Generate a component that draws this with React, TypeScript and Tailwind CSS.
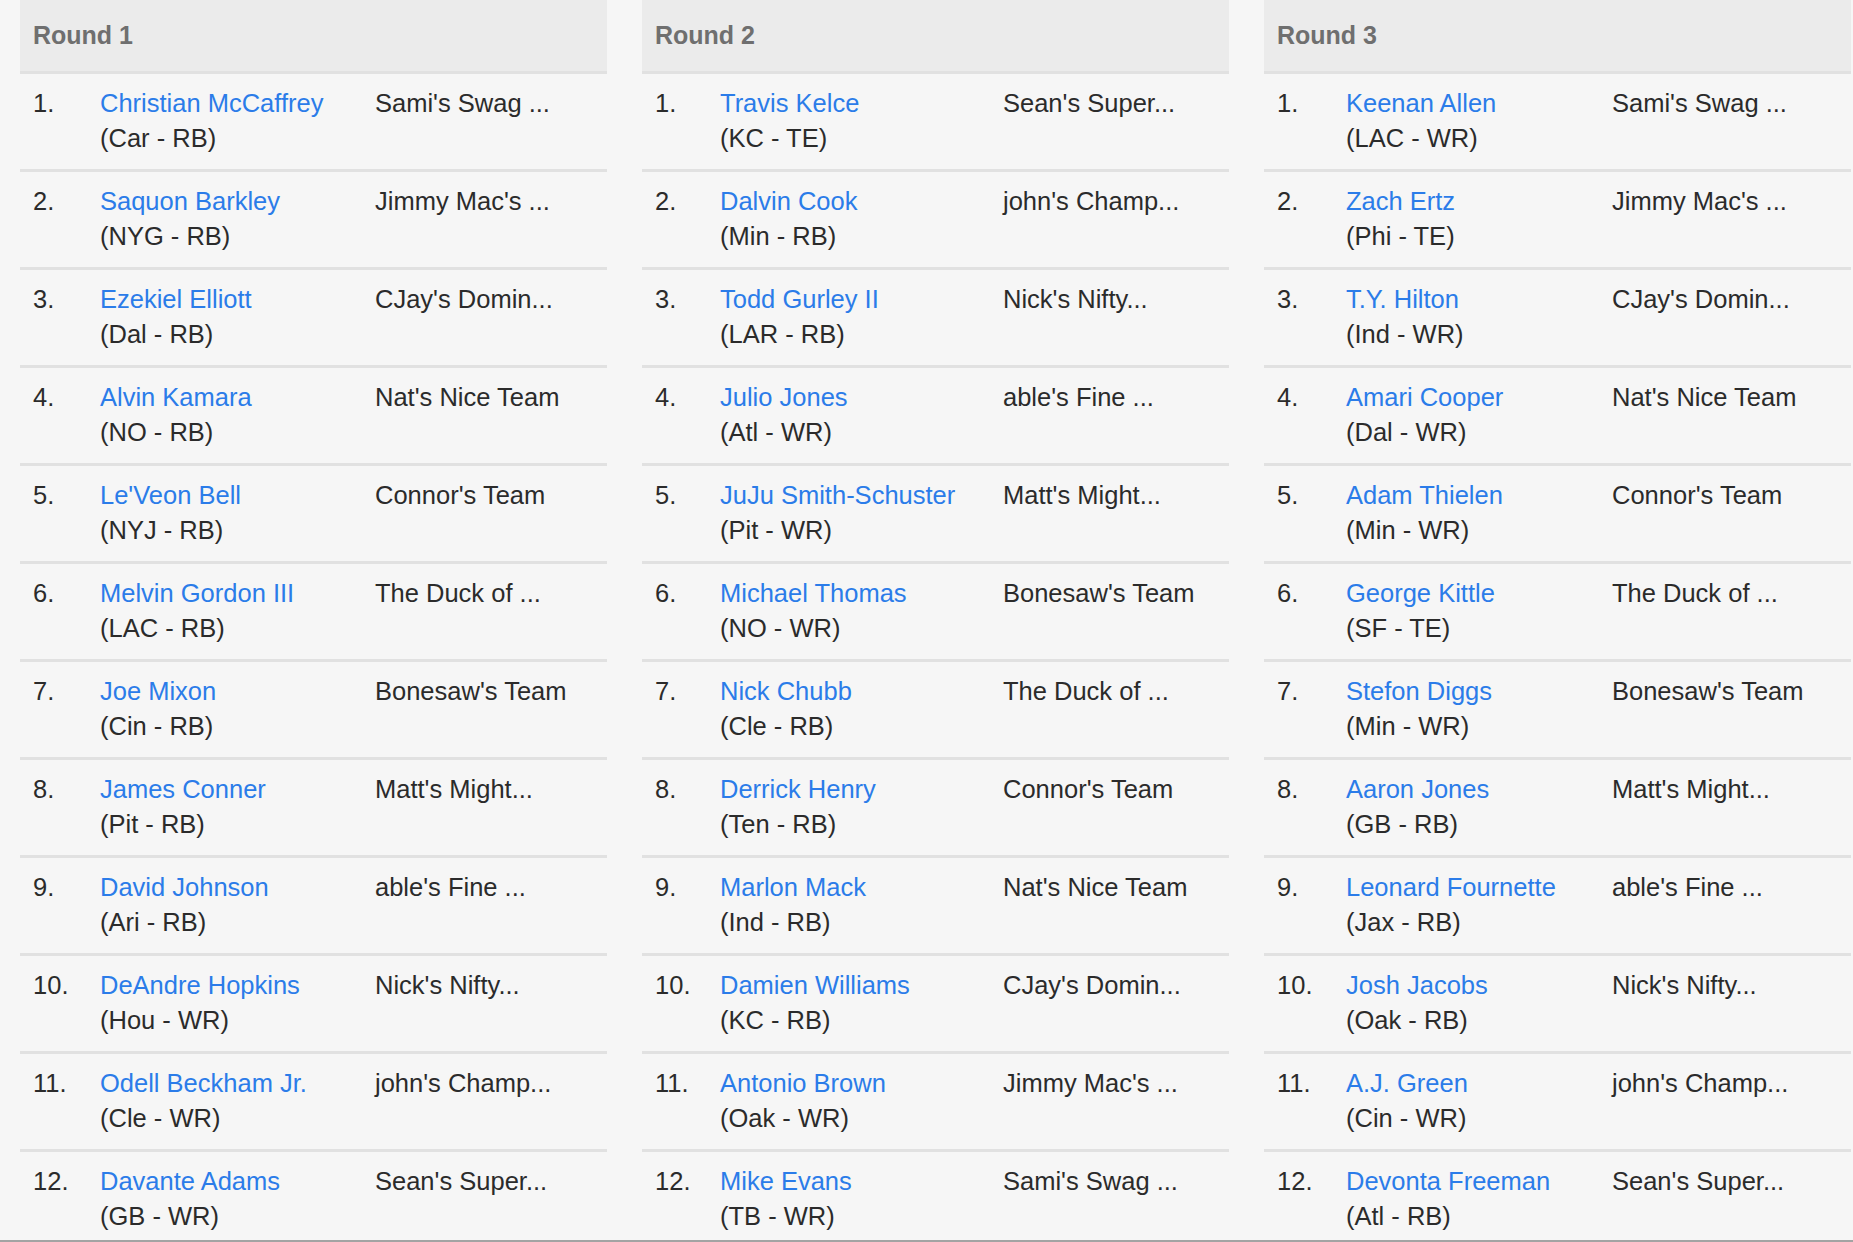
type Pick = { name: string; pos: string; team: string };

type Round = {
  title: string;
  numCol: string;
  nameCol: string;
  picks: Pick[];
};

const rounds: Round[] = [
  {
    title: "Round 1",
    numCol: "w-[67px]",
    nameCol: "w-[275px]",
    picks: [
      { name: "Christian McCaffrey", pos: "(Car - RB)", team: "Sami's Swag ..." },
      { name: "Saquon Barkley", pos: "(NYG - RB)", team: "Jimmy Mac's ..." },
      { name: "Ezekiel Elliott", pos: "(Dal - RB)", team: "CJay's Domin..." },
      { name: "Alvin Kamara", pos: "(NO - RB)", team: "Nat's Nice Team" },
      { name: "Le'Veon Bell", pos: "(NYJ - RB)", team: "Connor's Team" },
      { name: "Melvin Gordon III", pos: "(LAC - RB)", team: "The Duck of ..." },
      { name: "Joe Mixon", pos: "(Cin - RB)", team: "Bonesaw's Team" },
      { name: "James Conner", pos: "(Pit - RB)", team: "Matt's Might..." },
      { name: "David Johnson", pos: "(Ari - RB)", team: "able's Fine ..." },
      { name: "DeAndre Hopkins", pos: "(Hou - WR)", team: "Nick's Nifty..." },
      { name: "Odell Beckham Jr.", pos: "(Cle - WR)", team: "john's Champ..." },
      { name: "Davante Adams", pos: "(GB - WR)", team: "Sean's Super..." },
    ],
  },
  {
    title: "Round 2",
    numCol: "w-[65px]",
    nameCol: "w-[283px]",
    picks: [
      { name: "Travis Kelce", pos: "(KC - TE)", team: "Sean's Super..." },
      { name: "Dalvin Cook", pos: "(Min - RB)", team: "john's Champ..." },
      { name: "Todd Gurley II", pos: "(LAR - RB)", team: "Nick's Nifty..." },
      { name: "Julio Jones", pos: "(Atl - WR)", team: "able's Fine ..." },
      { name: "JuJu Smith-Schuster", pos: "(Pit - WR)", team: "Matt's Might..." },
      { name: "Michael Thomas", pos: "(NO - WR)", team: "Bonesaw's Team" },
      { name: "Nick Chubb", pos: "(Cle - RB)", team: "The Duck of ..." },
      { name: "Derrick Henry", pos: "(Ten - RB)", team: "Connor's Team" },
      { name: "Marlon Mack", pos: "(Ind - RB)", team: "Nat's Nice Team" },
      { name: "Damien Williams", pos: "(KC - RB)", team: "CJay's Domin..." },
      { name: "Antonio Brown", pos: "(Oak - WR)", team: "Jimmy Mac's ..." },
      { name: "Mike Evans", pos: "(TB - WR)", team: "Sami's Swag ..." },
    ],
  },
  {
    title: "Round 3",
    numCol: "w-[69px]",
    nameCol: "w-[266px]",
    picks: [
      { name: "Keenan Allen", pos: "(LAC - WR)", team: "Sami's Swag ..." },
      { name: "Zach Ertz", pos: "(Phi - TE)", team: "Jimmy Mac's ..." },
      { name: "T.Y. Hilton", pos: "(Ind - WR)", team: "CJay's Domin..." },
      { name: "Amari Cooper", pos: "(Dal - WR)", team: "Nat's Nice Team" },
      { name: "Adam Thielen", pos: "(Min - WR)", team: "Connor's Team" },
      { name: "George Kittle", pos: "(SF - TE)", team: "The Duck of ..." },
      { name: "Stefon Diggs", pos: "(Min - WR)", team: "Bonesaw's Team" },
      { name: "Aaron Jones", pos: "(GB - RB)", team: "Matt's Might..." },
      { name: "Leonard Fournette", pos: "(Jax - RB)", team: "able's Fine ..." },
      { name: "Josh Jacobs", pos: "(Oak - RB)", team: "Nick's Nifty..." },
      { name: "A.J. Green", pos: "(Cin - WR)", team: "john's Champ..." },
      { name: "Devonta Freeman", pos: "(Atl - RB)", team: "Sean's Super..." },
    ],
  },
];

function RoundColumn({ round }: { round: Round }) {
  return (
    <div className="w-[587px] shrink-0">
      <div className="flex h-[74px] items-center border-b-[3px] border-[#e1e1e1] bg-[#ebebeb] pl-[13px] text-[25px] font-bold text-[#6f6f6f]">
        {round.title}
      </div>
      {round.picks.map((pick, i) => (
        <div
          key={i}
          className="flex h-[98px] shrink-0 border-b-[3px] border-[#e1e1e1] pl-[13px] pt-[12px] text-[25.5px] leading-[35px] text-[#2b2b2b]"
        >
          <div className={round.numCol}>{i + 1}.</div>
          <div className={round.nameCol}>
            <a href="#" className="block text-[#2b7ce9]">
              {pick.name}
            </a>
            <div>{pick.pos}</div>
          </div>
          <div className="flex-1 whitespace-nowrap">{pick.team}</div>
        </div>
      ))}
    </div>
  );
}

export default function App() {
  return (
    <div className="flex h-screen flex-col overflow-hidden bg-[#f6f6f6] font-['Liberation_Sans',Arial,sans-serif]">
      <div className="flex flex-1 gap-[35px] overflow-hidden pl-5">
        {rounds.map((r) => (
          <RoundColumn key={r.title} round={r} />
        ))}
      </div>
      <div className="h-[2px] shrink-0 bg-[#a3a3a3]" />
    </div>
  );
}
